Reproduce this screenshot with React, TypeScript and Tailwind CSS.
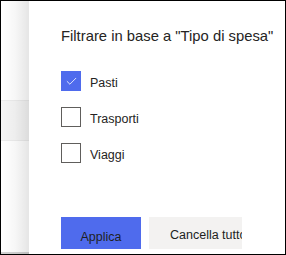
import { Check } from "lucide-react";

const options = [
  { label: "Pasti", checked: true },
  { label: "Trasporti", checked: false },
  { label: "Viaggi", checked: false },
];

export default function App() {
  return (
    <div
      className="w-[286px] h-[255px] border border-black flex overflow-hidden bg-white"
      style={{ fontFamily: '"Liberation Sans", Arial, sans-serif' }}
    >
      {/* page behind the panel */}
      <div className="relative w-[28px] shrink-0 flex flex-col">
        <div className="h-[99px]" />
        <div className="h-[41px] bg-[#f5f5f5] border-y border-[#ececec]" />
        <div className="flex-1" />
        <div className="h-[2px] bg-[#d2d2d2]" />
        <div className="absolute inset-0 bg-gradient-to-r from-transparent via-[rgba(0,0,0,0.03)] to-[rgba(0,0,0,0.1)]" />
      </div>

      {/* filter panel */}
      <div className="flex-1 flex flex-col pl-[32px] pt-[26px]">
        <h2 className="text-[14.8px] leading-[18px] text-[#252423] whitespace-nowrap">
          Filtrare in base a "Tipo di spesa"
        </h2>

        <div className="mt-[26px] flex flex-col gap-[16px]">
          {options.map((o) => (
            <label key={o.label} className="flex items-center gap-[9px] h-[20px]">
              {o.checked ? (
                <span className="w-[20px] h-[20px] bg-[#4f6bed] flex items-center justify-center">
                  <Check size={13} strokeWidth={1.5} color="white" />
                </span>
              ) : (
                <span className="w-[20px] h-[20px] border border-[#605e5c] bg-white" />
              )}
              <span className="text-[12.5px] text-[#252423] mt-[5px]">{o.label}</span>
            </label>
          ))}
        </div>

        <div className="mt-[54px] flex gap-[8px]">
          <button className="w-[80px] h-[32px] bg-[#4f6bed] text-[12.5px] text-[#201f1e] pt-[9px]">
            Applica
          </button>
          <button className="w-[93px] h-[32px] bg-[#f3f2f1] text-[12.5px] text-[#201f1e] pl-[21px] pt-[4px] text-left whitespace-nowrap overflow-hidden">
            Cancella tutto
          </button>
        </div>
      </div>
    </div>
  );
}
